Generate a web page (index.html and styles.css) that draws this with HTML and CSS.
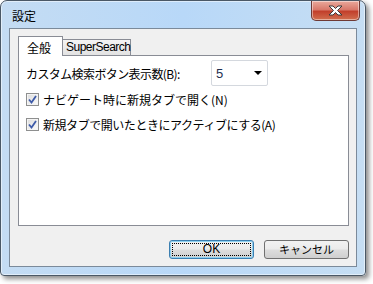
FILE: index.html
```html
<!DOCTYPE html>
<html lang="ja">
<head>
<meta charset="utf-8">
<link rel="stylesheet" href="styles.css">
</head>
<body>
<div class="window">
  <div class="titlebar">
    <span class="title">設定</span>
    <div class="close">
      <svg width="17" height="11" viewBox="0 0 17 11"><path d="M2 1 H6 L8.5 3.5 L11 1 H15 L10.5 5.5 L15 10 H11 L8.5 7.5 L6 10 H2 L6.5 5.5 Z" fill="#fff" stroke="#3b3b3b" stroke-width="1" stroke-linejoin="round"/></svg>
    </div>
  </div>
  <div class="client">
    <div class="tabs">
      <div class="tab active">全般</div>
      <div class="tab">SuperSearch</div>
    </div>
    <div class="panel">
      <div class="row">
        <span class="label">カスタム検索ボタン表示数(B):</span>
        <div class="combo"><span>5</span><span class="arrow"></span></div>
      </div>
      <label class="check"><span class="box"><svg width="9" height="9" viewBox="0 0 9 9"><path d="M1 4.5 L3.5 7.5 L8 1" fill="none" stroke="#3d5aa8" stroke-width="1.8"/></svg></span>ナビゲート時に新規タブで開く(N)</label>
      <label class="check tight"><span class="box"><svg width="9" height="9" viewBox="0 0 9 9"><path d="M1 4.5 L3.5 7.5 L8 1" fill="none" stroke="#3d5aa8" stroke-width="1.8"/></svg></span>新規タブで開いたときにアクティブにする(A)</label>
    </div>
    <div class="buttons">
      <div class="btn default"><span class="focus">OK</span></div>
      <div class="btn">キャンセル</div>
    </div>
  </div>
</div>
</body>
</html>
```
FILE: styles.css
```css
html, body { margin: 0; padding: 0; background: #fff; }
body {
  width: 373px; height: 284px; overflow: hidden;
  font-family: "Noto Sans CJK JP", "Noto Sans", sans-serif;
  font-size: 12px; color: #000;
}
.window {
  box-sizing: border-box;
  width: 366px; height: 276px;
  border: 1px solid #4a5866;
  border-radius: 7px 7px 4px 4px;
  background: linear-gradient(90deg, #c4dcf3 0%, #b8d8f8 50%, #c6def3 100%);
  box-shadow: 3px 3px 5px rgba(0,0,0,0.45), inset 0 0 0 1px rgba(255,255,255,0.5);
  display: flex; flex-direction: column;
  padding: 0 8px 8px 8px;
}
.titlebar {
  height: 29px;
  display: flex; justify-content: space-between; align-items: flex-start;
}
.title { margin: 7px 0 0 3px; font-size: 12px; line-height: 16px; }
.close {
  box-sizing: border-box;
  width: 49px; height: 20px; margin-right: -3px;
  border: 1px solid #6e3a35;
  border-top: none;
  border-radius: 0 0 5px 5px;
  background: linear-gradient(180deg, #e9a99c 0%, #d8796b 45%, #c2402c 55%, #d16f4f 100%);
  box-shadow: inset 0 0 0 1px rgba(255,255,255,0.45);
  display: flex; align-items: center; justify-content: center;
}
.client {
  flex: 1;
  border: 1px solid #7b8a9a;
  background: #f0f0f0;
  padding: 7px 7px 7px 8px;
  display: flex; flex-direction: column;
}
.tabs { display: flex; align-items: flex-end; height: 19px; }
.tab {
  box-sizing: border-box;
  height: 16px; width: 68px; padding: 0 0 0 3px;
  border: 1px solid #898c95; border-bottom: none;
  background: linear-gradient(180deg, #f4f4f4, #e2e2e2);
  font-family: "Liberation Sans", "Noto Sans CJK JP", sans-serif;
  font-size: 12px; line-height: 15px; letter-spacing: -0.5px;
  border-left: none; white-space: nowrap;
}
.tab.active {
  height: 20px; width: 45px; margin-bottom: -1px;
  background: #fff; border-left: 1px solid #898c95;
  padding: 3px 0 0 8px;
  font-family: "Noto Sans CJK JP", sans-serif; font-size: 12px; line-height: 15px;
  letter-spacing: 0;
  position: relative; z-index: 1;
}
.panel {
  box-sizing: border-box;
  height: 171px;
  background: #fff;
  border: 1px solid #898c95;
  padding: 4px 8px 0 7px;
  display: flex; flex-direction: column;
}
.row { display: flex; align-items: center; height: 26px; }
.label { width: 185px; letter-spacing: -0.6px; margin-top: 1px; }
.combo {
  box-sizing: border-box;
  width: 57px; height: 26px;
  border: 1px solid #d4d8de; border-radius: 2px;
  display: flex; align-items: center; justify-content: space-between;
  padding: 0 5px 0 4px;
  font-family: "Liberation Sans", sans-serif; font-size: 13px; color: #1e2f50;
}
.arrow {
  width: 0; height: 0;
  border-left: 4px solid transparent; border-right: 4px solid transparent;
  border-top: 4px solid #000;
}
.check {
  display: flex; align-items: center; height: 26px;
  letter-spacing: 0;
}
.check.tight { letter-spacing: -0.45px; margin-top: -1px; }
.box {
  box-sizing: border-box;
  width: 13px; height: 13px; margin-right: 4px;
  border: 1px solid #8e8f8f;
  background: linear-gradient(135deg, #dcdcdc, #fbfbfb);
  box-shadow: inset 0 0 0 1px #f4f4f4;
  display: flex; align-items: center; justify-content: center;
}
.buttons {
  display: flex; justify-content: flex-end; gap: 10px;
  margin-top: 14px;
}
.btn {
  box-sizing: border-box;
  width: 85px; height: 19px;
  border: 1px solid #707070; border-radius: 3px;
  background: linear-gradient(180deg, #f2f2f2 0%, #ebebeb 48%, #dddddd 52%, #cfcfcf 100%);
  display: flex; align-items: center; justify-content: center;
  font-size: 11px; line-height: 15px;
}
.btn.default {
  border-color: #3c7fb1;
  box-shadow: inset 0 0 0 1px #8ed1f1;
  padding: 2px;
}
.focus {
  flex: 1; align-self: stretch;
  border: 1px dotted #000;
  display: flex; align-items: center; justify-content: center;
  font-family: "Liberation Sans", sans-serif; font-size: 12px;
}
```
